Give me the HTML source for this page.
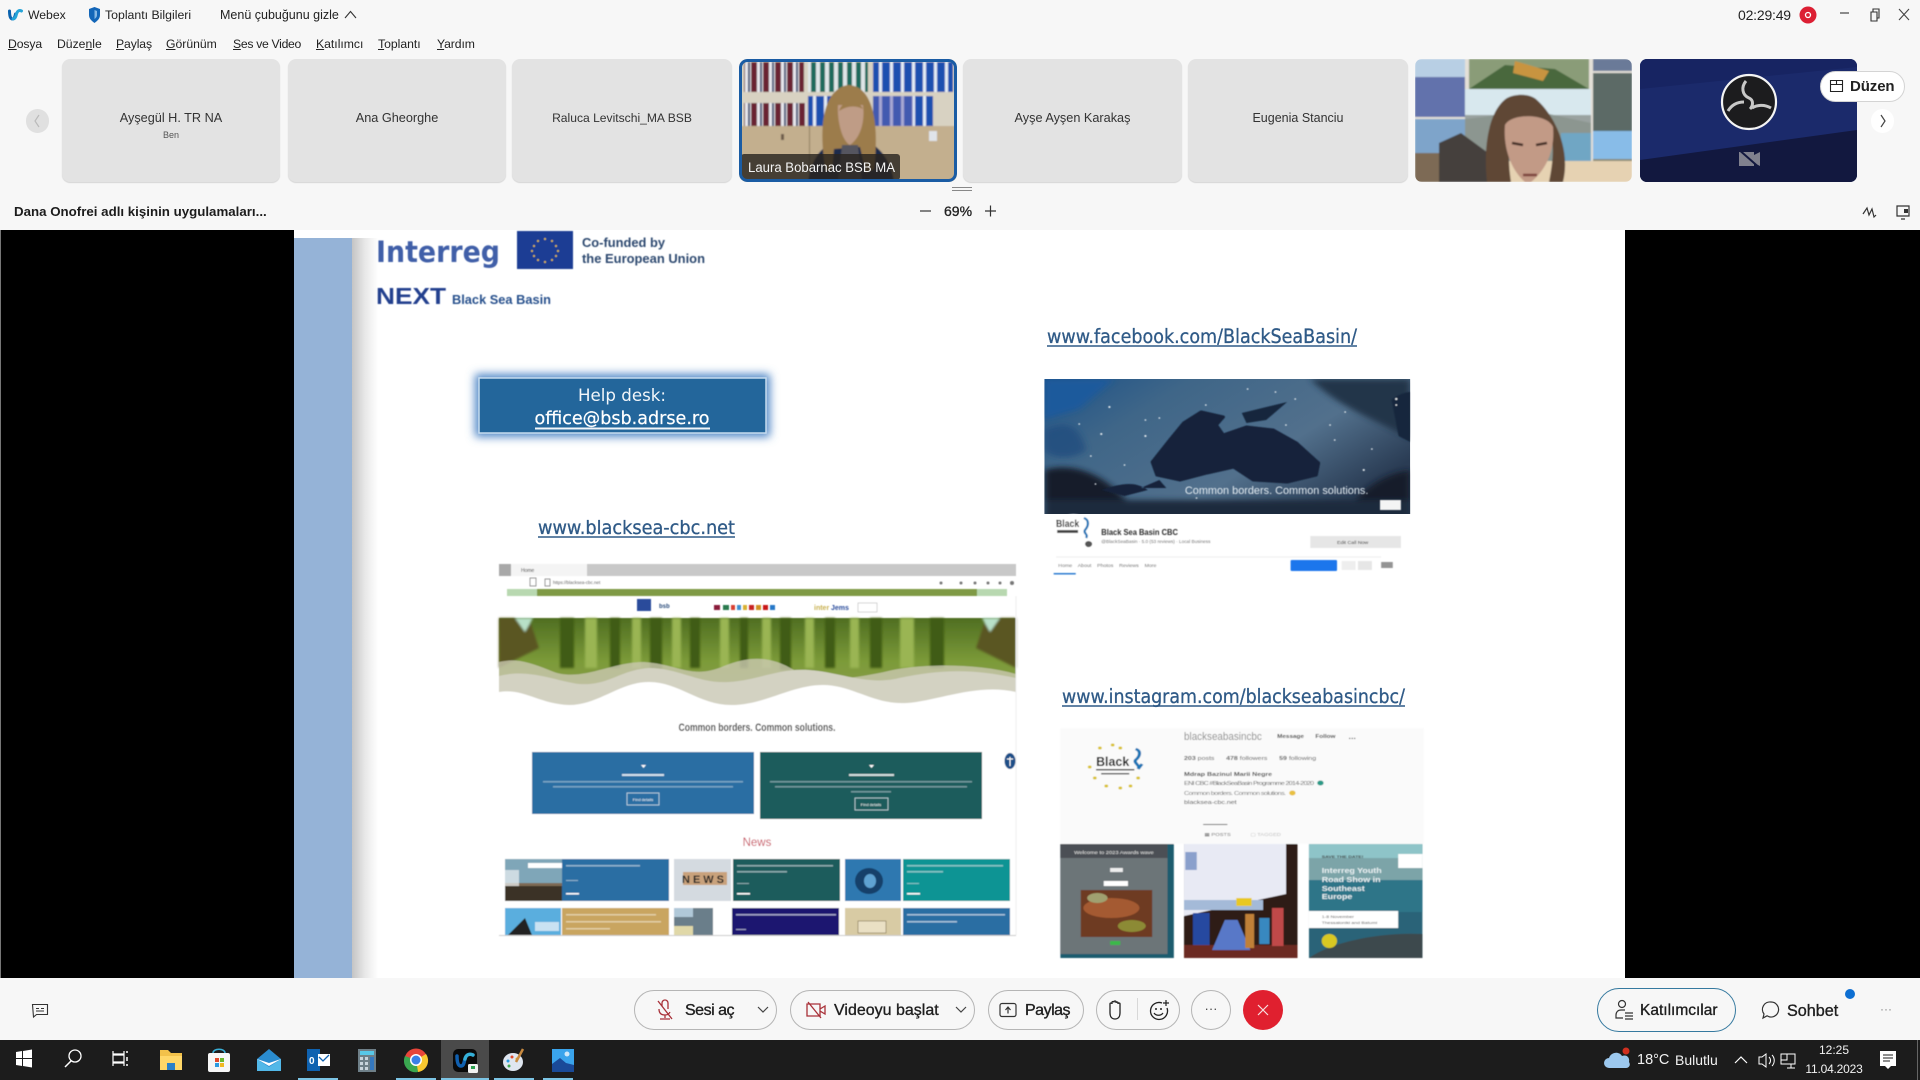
<!DOCTYPE html>
<html lang="tr"><head><meta charset="utf-8"><title>Webex</title>
<style>
html,body{margin:0;padding:0;width:1920px;height:1080px;overflow:hidden;background:#f7f7f7;font-family:"Liberation Sans",sans-serif;color:#222}
.a{position:absolute;white-space:nowrap}
.t{line-height:16px;font-size:13px}
.m{font-size:12.2px;line-height:16px;top:36px;color:#222}
.tile{position:absolute;top:59px;height:123px;background:#e3e3e3;border-radius:8px;box-shadow:0 1px 1px #d4d4d4;text-align:center;line-height:118px;font-size:12.7px;color:#333}
.pill{position:absolute;top:990px;height:38px;border:1px solid #b5b5b5;border-radius:20px;background:#f7f7f7}
.bt{position:absolute;font-size:16px;font-weight:400;line-height:20px;top:1001px;color:#1f1f1f;white-space:nowrap;-webkit-text-stroke:.35px #1f1f1f}
svg{position:absolute;overflow:visible}
u{text-decoration:underline}
</style></head><body>

<!-- title bar -->
<svg style="left:8px;top:8px" width="15" height="14" viewBox="0 0 15 14"><path d="M1.500 3c0 5 1 8 3 8s2.500-3 3-5" fill="none" stroke="#0a62ae" stroke-width="3" stroke-linecap="round"/><path d="M13.500 3c-2-1-4-.5-5 3-.6 3-2 5-3.500 5" fill="none" stroke="#25a4d8" stroke-width="3" stroke-linecap="round"/></svg>
<div class="a t" style="left:28px;top:7px;font-size:12.2px">Webex</div>
<svg style="left:88px;top:7px" width="13" height="16" viewBox="0 0 13 16"><path d="M6.500 0 12 2v6c0 4-3 6-5.500 8C4 14 1 12 1 8V2z" fill="#1366b8"/><path d="M6.500 3 9 4v4c0 2-1.200 3-2.500 4z" fill="#86b8e4"/></svg>
<div class="a t" style="left:105px;top:7px;font-size:12.300px">Toplantı Bilgileri</div>
<div class="a t" style="left:220px;top:7px;font-size:12.500px">Menü çubuğunu gizle</div>
<svg style="left:344px;top:10px" width="13" height="9" viewBox="0 0 13 9"><path d="M1 8 6.500 1.500 12 8" fill="none" stroke="#333" stroke-width="1.100"/></svg>
<div class="a t" style="left:1738px;top:7px;font-size:14px;letter-spacing:-.2px">02:29:49</div>
<svg style="left:1799px;top:6px" width="18" height="18"><circle cx="9" cy="9" r="8.500" fill="#dc1f33"/><circle cx="9" cy="9" r="2.500" fill="none" stroke="#fff" stroke-width="1.300"/></svg>
<svg style="left:1838px;top:6px" width="76" height="18" viewBox="0 0 76 18"><path d="M2 7h9" stroke="#444" stroke-width="1.200"/><path d="M33 6h6v9h-6zM35 6V3h6v9h-2" fill="none" stroke="#333" stroke-width="1.100"/><path d="M61 3l10 11M71 3 61 14" stroke="#444" stroke-width="1.100"/></svg>

<div class="a m" style="left:8px;letter-spacing:-.1px"><u>D</u>osya</div>
<div class="a m" style="left:57px"><span>Düze</span><u>n</u>le</div>
<div class="a m" style="left:116px;letter-spacing:-.1px"><u>P</u>aylaş</div>
<div class="a m" style="left:166px"><u>G</u>örünüm</div>
<div class="a m" style="left:233px;letter-spacing:-.3px"><u>S</u>es ve Video</div>
<div class="a m" style="left:316px"><u>K</u>atılımcı</div>
<div class="a m" style="left:378px"><u>T</u>oplantı</div>
<div class="a m" style="left:437px;letter-spacing:-.1px"><u>Y</u>ardım</div>

<!-- thumbnails -->
<div class="a" style="left:26px;top:109px;width:23px;height:24px;border-radius:12px;background:#e0e0e0"></div>
<svg style="left:33px;top:114px" width="8" height="14"><path d="M6 1 2 7l4 6" fill="none" stroke="#bbb" stroke-width="1.200"/></svg>
<div class="tile" style="left:62px;width:218px">Ayşegül H. TR NA</div>
<div class="a" style="left:62px;width:218px;top:129px;text-align:center;font-size:9px;line-height:12px;color:#555">Ben</div>
<div class="tile" style="left:288px;width:218px">Ana Gheorghe</div>
<div class="tile" style="left:512px;width:220px;font-size:12.100px">Raluca Levitschi_MA BSB</div>
<div class="tile" style="left:963px;width:219px">Ayşe Ayşen Karakaş</div>
<div class="tile" style="left:1188px;width:220px;font-size:12.500px">Eugenia Stanciu</div>

<!-- Laura tile -->
<svg style="left:739px;top:59px;border-radius:8px" width="218" height="123" viewBox="0 0 218 123">
<defs>
<pattern id="b1" width="12" height="30" patternUnits="userSpaceOnUse"><rect width="12" height="30" fill="#e8e8ee"/><rect width="6" height="30" fill="#6a2030"/><rect x="9" width="2" height="30" fill="#20406a"/></pattern>
<pattern id="b2" width="9" height="30" patternUnits="userSpaceOnUse"><rect width="9" height="30" fill="#dfe6e8"/><rect width="5" height="30" fill="#1c6a5c"/></pattern>
<pattern id="b3" width="11" height="30" patternUnits="userSpaceOnUse"><rect width="11" height="30" fill="#e4ecf6"/><rect width="8" height="30" fill="#1d50b0"/></pattern>
<clipPath id="lc"><rect width="218" height="123" rx="8"/></clipPath>
<filter id="s"><feGaussianBlur stdDeviation=".8"/></filter>
</defs>
<g clip-path="url(#lc)"><g filter="url(#s)">
<rect width="218" height="123" fill="#c4b08c"/>
<rect y="0" width="218" height="67" fill="#d8d2c2"/>
<rect x="5" y="3" width="60" height="30" fill="url(#b1)"/>
<rect x="69" y="3" width="60" height="30" fill="url(#b2)"/>
<rect x="134" y="3" width="80" height="30" fill="url(#b3)"/>
<rect x="5" y="37" width="62" height="30" fill="url(#b1)" transform="translate(0 7)"/>
<rect x="69" y="37" width="30" height="30" fill="url(#b3)"/>
<rect x="134" y="37" width="60" height="30" fill="url(#b3)"/>
<rect x="134" y="37" width="40" height="30" fill="#6a64b0" opacity=".5"/>
<rect x="0" y="67" width="218" height="56" fill="#c3af8e"/>
<rect x="70" y="67" width="1" height="56" fill="#8c7a5c"/><rect x="42" y="75" width="3" height="6" fill="#6a5a48"/><rect x="190" y="72" width="8" height="10" fill="#e0e4ea"/>
<path d="M69 123c2-20 12-36 28-40h32c14 6 24 22 26 40z" fill="#1b2c4c"/>
<path d="M87 112c-8-40-4-82 22-86 24 0 32 36 26 84l-8 4-6-26-26 2-2 20z" fill="#9c7c4c"/>
<path d="M99 46h25c2 16-2 32-13 40-8-4-13-24-12-40z" fill="#bf9c86"/>
<path d="M100 52c4-12 18-14 24-2-8-4-16-3-24 2z" fill="#9c7c4c"/>
<path d="M103 86h16l4 37h-24z" fill="#55555f"/>
</g>
<rect x="2" y="95" width="159" height="26" rx="3" fill="#2a2520" opacity=".82"/>
<text x="9" y="113" font-family="Liberation Sans" font-size="13.500" fill="#f4f4f4" textLength="147" lengthAdjust="spacingAndGlyphs">Laura Bobarnac BSB MA</text>
<rect x="1.500" y="1.500" width="215" height="120" rx="7" fill="none" stroke="#1a5ca4" stroke-width="3"/></g>
</svg>

<!-- woman photo tile -->
<svg style="left:1415px;top:59px" width="217" height="123" viewBox="0 0 217 123">
<defs><clipPath id="wc"><rect width="217" height="123" rx="7"/></clipPath></defs>
<g clip-path="url(#wc)"><g filter="url(#s)">
<rect width="217" height="123" fill="#e4e0d8"/>
<rect width="50" height="18" fill="#b8cfe4"/><rect y="18" width="50" height="40" fill="#6272ac"/><rect y="60" width="50" height="34" fill="#7ea4ca"/><rect y="94" width="50" height="29" fill="#7d6a55"/>
<rect x="54" width="120" height="30" fill="#8a9c78"/><path d="M54 30 90 6l50 4 34 20z" fill="#48683e"/><path d="M100 2l34 10-6 10-30-8z" fill="#c89440"/>
<rect x="178" width="39" height="12" fill="#6a7a98"/><rect x="178" y="14" width="39" height="58" fill="#5c6a66"/><rect x="178" y="72" width="39" height="28" fill="#88bce8"/><rect x="178" y="100" width="39" height="23" fill="#8a8a74"/>
<rect x="50" y="30" width="126" height="34" fill="#d8e8ee"/><rect x="50" y="56" width="126" height="46" fill="#9aa2a0"/><path d="M50 60l70-8 56 12v38H50z" fill="#8c9690"/><rect x="146" y="74" width="30" height="28" fill="#70a6c4"/>
<rect x="50" y="102" width="167" height="21" fill="#e6d2b2"/>
<path d="M24 123V84l22-10 30 22 4 27z" fill="#45403e"/>
<path d="M72 123c-4-36 2-72 20-84 10-5 24-4 30 2 18 16 34 50 26 82h-14c4-20 6-40 0-50-12-10-28-10-36 2-6 16-4 34-2 48z" fill="#5e4636"/>
<path d="M90 66c6-12 42-12 48 2 2 22-6 42-22 55h-6c-14-12-22-34-20-57z" fill="#c29a86"/>
<path d="M97 84l11 2M121 86l11-2" stroke="#3f2a20" stroke-width="2.500"/>
<path d="M108 116h14" stroke="#7a4038" stroke-width="2.500"/>
</g></g></svg>

<!-- OBS tile -->
<svg style="left:1640px;top:59px" width="217" height="123" viewBox="0 0 217 123">
<defs><clipPath id="oc"><rect width="217" height="123" rx="7"/></clipPath></defs>
<g clip-path="url(#oc)"><rect width="217" height="123" fill="#1b2a6b"/><path d="M0 0h217v8L0 30z" fill="#172462"/><path d="M0 101l217-30v52H0z" fill="#12183f"/>
<circle cx="109" cy="43" r="27" fill="#1c1c1e" stroke="#f4f4f4" stroke-width="2.200"/>
<path d="M106 22c-5 6-4 14 3 17 5 2 4 8 1 11M131 49c-7-4-14-3-19 0M88 52c3-5 8-9 16-9" fill="none" stroke="#c8c8c8" stroke-width="3"/>
<rect x="99" y="93" width="15" height="14" fill="#80818e"/><path d="M114 96l6-3v14l-6-3z" fill="#80818e"/><path d="M97 89l25 22" stroke="#12183f" stroke-width="2"/></g></svg>

<div class="a" style="left:1820px;top:71px;width:83px;height:29px;background:#fff;border:1px solid #d4d4d4;border-radius:16px"></div>
<svg style="left:1829px;top:79px" width="15" height="14"><path d="M1.500 1.500h12v11h-12zM1.500 5.500h12M7.500 1.500v4" fill="none" stroke="#222" stroke-width="1.100"/></svg>
<div class="a" style="left:1850px;top:78px;font-size:15px;line-height:17px;font-weight:700;color:#222;letter-spacing:-.1px">Düzen</div>
<div class="a" style="left:1871px;top:109px;width:23px;height:24px;border-radius:12px;background:#fff"></div>
<svg style="left:1879px;top:114px" width="8" height="14"><path d="M2 1l4 6-4 6" fill="none" stroke="#444" stroke-width="1.200"/></svg>

<!-- share bar -->
<svg style="left:952px;top:187px" width="20" height="5"><path d="M0 .5h20M0 3.500h20" stroke="#888"/></svg>
<div class="a" style="left:14px;top:204px;font-size:13.300px;line-height:16px;font-weight:700;color:#1c1c1c">Dana Onofrei adlı kişinin uygulamaları...</div>
<svg style="left:920px;top:204px" width="74" height="14"><path d="M0 7h11" stroke="#333" stroke-width="1.200"/><path d="M65 7h11M70.500 1.500v11" stroke="#333" stroke-width="1.200"/></svg>
<div class="a" style="left:944px;top:203px;font-size:14px;line-height:16px;font-weight:400;-webkit-text-stroke:.3px #222;color:#222">69%</div>
<svg style="left:1862px;top:203px" width="50" height="18" viewBox="0 0 50 18"><path d="M1 11 5 5l2 7 3-6 2 8 2-2" fill="none" stroke="#333" stroke-width="1.200"/><path d="M35 3h12v10H35zM39 16h4" fill="none" stroke="#333" stroke-width="1.200"/><rect x="42" y="6" width="4" height="4" fill="#333"/></svg>

<!-- black and slide -->
<div class="a" style="left:0;top:230px;width:1920px;height:748px;background:#000"></div>
<div class="a" style="left:0;top:230px;width:1px;height:748px;background:#777"></div>
<div class="a" style="left:294px;top:230px;width:1331px;height:748px;background:#fff"></div>
<div class="a" style="left:294px;top:238px;width:58px;height:740px;background:#95b3d7"></div>
<div class="a" style="left:352px;top:238px;width:26px;height:740px;background:linear-gradient(90deg,#c4c4c4,#e8e8e8 50%,#fff)"></div>

<svg style="left:0;top:0" width="1920" height="1080" viewBox="0 0 1920 1080" font-family="Liberation Sans">
<defs>
<filter id="bl"><feGaussianBlur stdDeviation=".5"/></filter>
<filter id="bl2"><feGaussianBlur stdDeviation="1"/></filter>
<filter id="bl3"><feGaussianBlur stdDeviation="3"/></filter>
<filter id="gl" x="-20%" y="-40%" width="140%" height="180%"><feGaussianBlur stdDeviation="4.500"/></filter>
<clipPath id="mapc"><rect x="1041" y="379" width="315" height="135"/></clipPath>
<linearGradient id="map" x1="0" y1="0" x2="1" y2=".6"><stop offset="0" stop-color="#1d5288"/><stop offset=".3" stop-color="#3f6688"/><stop offset=".7" stop-color="#52708c"/><stop offset="1" stop-color="#2a3c54"/></linearGradient>
<linearGradient id="fo" x1="0" y1="0" x2="0" y2="1"><stop offset="0" stop-color="#4f6e22"/><stop offset=".5" stop-color="#7c9b39"/><stop offset="1" stop-color="#8f9a50"/></linearGradient>
</defs>

<!-- logos -->
<g filter="url(#bl)">
<text x="376" y="262" font-family="DejaVu Sans" font-size="29" font-weight="700" fill="#3f5ea8" textLength="124" lengthAdjust="spacingAndGlyphs">Interreg</text>
<rect x="517" y="231" width="56" height="38" fill="#1f3c94"/>
<g fill="#e3c13a"><circle cx="545" cy="239" r="1"/><circle cx="552" cy="241" r="1"/><circle cx="556" cy="246" r="1"/><circle cx="558" cy="251" r="1"/><circle cx="556" cy="256" r="1"/><circle cx="552" cy="260" r="1"/><circle cx="545" cy="262" r="1"/><circle cx="538" cy="260" r="1"/><circle cx="534" cy="256" r="1"/><circle cx="532" cy="251" r="1"/><circle cx="534" cy="246" r="1"/><circle cx="538" cy="241" r="1"/></g>
<text x="582" y="247" font-size="13" font-weight="700" fill="#2d4a70" textLength="83" lengthAdjust="spacingAndGlyphs">Co-funded by</text>
<text x="582" y="263" font-size="13" font-weight="700" fill="#2d4a70" textLength="123" lengthAdjust="spacingAndGlyphs">the European Union</text>
<text x="376" y="304" font-size="23" font-weight="700" fill="#243f8e" textLength="70" lengthAdjust="spacingAndGlyphs">NEXT</text>
<text x="452" y="304" font-size="13" font-weight="700" fill="#27508c" textLength="99" lengthAdjust="spacingAndGlyphs">Black Sea Basin</text>
</g>

<!-- help desk -->
<rect x="475" y="374" width="295" height="63" fill="#4f86c6" filter="url(#gl)"/>
<rect x="479" y="378" width="287" height="55" fill="#23669b" stroke="#c6dcef" stroke-width="1.500"/>
<text x="622" y="401" font-family="DejaVu Sans" font-size="17" fill="#f2f6fa" text-anchor="middle" textLength="88" lengthAdjust="spacingAndGlyphs">Help desk:</text>
<text x="622" y="424" font-family="DejaVu Sans" font-size="17.500" fill="#fff" text-anchor="middle" textLength="175" lengthAdjust="spacingAndGlyphs" stroke="#fff" stroke-width=".2">office@bsb.adrse.ro</text>
<path d="M535 428.500h175" stroke="#f2f6fa" stroke-width="2"/>

<!-- links -->
<g fill="#2f5a87" stroke="#2f5a87" stroke-width=".3" font-family="DejaVu Sans" font-size="19">
<text x="538" y="534" textLength="197" lengthAdjust="spacingAndGlyphs">www.blacksea-cbc.net</text>
<text x="1047" y="343" font-size="19.500" textLength="310" lengthAdjust="spacingAndGlyphs">www.facebook.com/BlackSeaBasin/</text>
<text x="1062" y="703" font-size="19.500" textLength="343" lengthAdjust="spacingAndGlyphs">www.instagram.com/blackseabasincbc/</text>
</g>
<g stroke="#2f5a87" stroke-width="1.600"><path d="M538 537h197M1047 346h310M1062 706h343"/></g>

<!-- facebook shot (stretched group) -->
<g transform="translate(1020 0) scale(1.1613 1) translate(-1020 0)">
<g clip-path="url(#mapc)">
<rect x="1041" y="379" width="315" height="135" fill="url(#map)"/>
<g filter="url(#bl3)"><path d="M1041 470c30-10 60 10 80 44h-80zM1300 514c10-20 30-40 56-44v44z" fill="#141e2c"/><path d="M1041 500h315v20h-315z" fill="#1c2a3c"/><path d="M1270 379h86v60c-30-20-60-30-86-60z" fill="#243448"/><path d="M1041 379h60l-30 30-30 10z" fill="#1c5a9c"/><path d="M1041 430c20-10 30-5 36 20-10 10-30 10-36 0z" fill="#1f4d7e" opacity=".8"/></g>
<g filter="url(#bl)">
<path d="M1134 462 1149 440 1161 423 1176 412 1195 417 1189 425 1195 435 1215 427 1238 430 1258 443 1277 463 1275 475 1250 482 1221 480 1204 467 1181 473 1158 480 1138 475z" fill="#13243a" stroke="#13243a" stroke-width="3" stroke-linejoin="round"/>
<path d="M1211 413 1250 402 1232 420 1215 423z" fill="#15273e"/>
<path d="M1090 490c20-8 30-8 40 0l-20 6zM1140 480l-16 8 22 0z" fill="#13243a"/>
<path d="M1340 400c8-8 16-8 16-8v50l-10-6z" fill="#18283e"/>
<g fill="#e8edf0"><circle cx="1097" cy="407" r="1"/><circle cx="1071" cy="424" r=".8"/><circle cx="1090" cy="434" r="1"/><circle cx="1128" cy="436" r="1"/><circle cx="1140" cy="418" r=".8"/><circle cx="1216" cy="389" r=".8"/><circle cx="1240" cy="392" r=".8"/><circle cx="1257" cy="399" r=".8"/><circle cx="1249" cy="425" r=".8"/><circle cx="1344" cy="399" r="1"/><circle cx="1344" cy="405" r=".8"/><circle cx="1291" cy="440" r=".8"/><circle cx="1323" cy="449" r=".8"/><circle cx="1316" cy="470" r="1"/><circle cx="1081" cy="456" r=".8"/><circle cx="1085" cy="484" r=".8"/><circle cx="1110" cy="465" r=".8"/><circle cx="1172" cy="498" r=".8"/><circle cx="1128" cy="420" r=".8"/><circle cx="1180" cy="405" r=".8"/><circle cx="1287" cy="425" r=".8"/><circle cx="1300" cy="412" r=".8"/></g>
<text x="1162" y="494" font-size="11" fill="#e4ecf2" textLength="158" lengthAdjust="spacingAndGlyphs">Common borders. Common solutions.</text>
<rect x="1330" y="500" width="18" height="10" fill="#f4f4f4"/>
</g></g>
<g filter="url(#bl)">
<circle cx="1066" cy="532" r="18" fill="#fff"/>
<text x="1051" y="527" font-size="10" font-weight="700" fill="#222" textLength="20" lengthAdjust="spacingAndGlyphs">Black</text>
<path d="M1075 518c5 2 4 8 1 12-2 3 3 4 1 8" fill="none" stroke="#2178b8" stroke-width="2"/>
<rect x="1052" y="530" width="18" height="3" fill="#444"/>
<circle cx="1079" cy="544" r="3" fill="#555"/>
<text x="1090" y="535" font-size="8" font-weight="700" fill="#2a2a2a" textLength="66" lengthAdjust="spacingAndGlyphs">Black Sea Basin CBC</text>
<text x="1090" y="543" font-size="4.500" fill="#777" textLength="94" lengthAdjust="spacingAndGlyphs">@BlackSeaBasin · 5.0 (53 reviews) · Local Business</text>
<rect x="1270" y="536" width="78" height="12" fill="#e6e6e6"/>
<text x="1293" y="544" font-size="4.500" fill="#333">Edit Call Now</text>
<path d="M1051 557h280" stroke="#eee"/>
<text x="1053" y="567" font-size="4.500" fill="#777" xml:space="preserve">Home    About    Photos    Reviews    More</text>
<rect x="1049" y="573" width="19" height="1.500" fill="#2a7ad0"/>
<rect x="1253" y="560" width="40" height="11" rx="1" fill="#1a76ec"/>
<rect x="1297" y="561" width="12" height="9" fill="#eee"/><rect x="1311" y="561" width="12" height="9" fill="#e6e6e6"/>
<rect x="1331" y="562" width="10" height="6" fill="#666" opacity=".7"/>
</g></g>

<!-- website shot -->
<g filter="url(#bl)">
<rect x="499" y="564" width="517" height="12" fill="#c8c8c8"/>
<rect x="499" y="564" width="12" height="12" fill="#a8a8a8"/><rect x="511" y="564" width="76" height="12" fill="#f4f4f4"/>
<text x="521" y="572" font-size="5" fill="#444">Home</text>
<text x="553" y="584" font-size="4.500" fill="#666">https://blacksea-cbc.net</text>
<path d="M530 578h6v8h-6zM545 579h5v7h-5z" fill="none" stroke="#777" stroke-width=".7"/>
<g fill="#777"><circle cx="941" cy="583" r="1.500"/><circle cx="961" cy="583" r="1.500"/><circle cx="975" cy="583" r="1.500"/><circle cx="988" cy="583" r="1.500"/><circle cx="1000" cy="583" r="1.500"/><circle cx="1012" cy="583" r="2"/></g>
<rect x="507" y="589" width="500" height="7" fill="#7f9a44"/>
<rect x="507" y="589" width="30" height="7" fill="#b8d8b0"/><rect x="977" y="589" width="30" height="7" fill="#b8d8b0"/>
<rect x="637" y="599" width="14" height="12" fill="#2b4c9b"/>
<text x="659" y="608" font-size="6" font-weight="700" fill="#2b4c7b">bsb</text>
<rect x="714" y="605" width="6" height="5" fill="#8a1c3a"/><rect x="723" y="605" width="6" height="5" fill="#2c7a50"/><rect x="731" y="605" width="4" height="5" fill="#d84030"/><rect x="737" y="605" width="4" height="5" fill="#4090d0"/><rect x="743" y="605" width="4" height="5" fill="#d8b030"/><rect x="749" y="605" width="5" height="5" fill="#c82020"/><rect x="756" y="605" width="5" height="5" fill="#d09020"/><rect x="763" y="605" width="5" height="5" fill="#c81818"/><rect x="770" y="605" width="5" height="5" fill="#2878c8"/>
<text x="814" y="610" font-size="7" font-weight="700" fill="#c8b050">inter</text><text x="831" y="610" font-size="7" font-weight="700" fill="#2b4c9b">Jems</text>
<rect x="858" y="603" width="19" height="9" fill="#fff" stroke="#aaa" stroke-width=".5"/>
<rect x="499" y="618" width="517" height="87" fill="url(#fo)"/>
<g filter="url(#bl2)">
<path d="M499 618h30l10 30-40 20z" fill="#5a5620"/><path d="M1016 618h-30l-10 30 40 20z" fill="#5a5620"/>
<path d="M515 618h18l-8 14z" fill="#b8e0c8"/><path d="M1000 618h-18l8 14z" fill="#b8e0c8"/>
<g fill="#3f5c18"><rect x="560" y="618" width="14" height="50"/><rect x="610" y="618" width="10" height="50"/><rect x="650" y="618" width="12" height="52"/><rect x="690" y="618" width="10" height="50"/><rect x="740" y="618" width="8" height="50"/><rect x="780" y="618" width="11" height="52"/><rect x="825" y="618" width="10" height="50"/><rect x="870" y="618" width="12" height="50"/><rect x="930" y="618" width="14" height="50"/></g>
<g fill="#9ab552"><rect x="585" y="618" width="12" height="50"/><rect x="632" y="618" width="9" height="50"/><rect x="672" y="618" width="9" height="50"/><rect x="720" y="618" width="9" height="50"/><rect x="762" y="618" width="9" height="50"/><rect x="805" y="618" width="9" height="50"/><rect x="850" y="618" width="9" height="50"/><rect x="900" y="618" width="14" height="50"/></g>
</g>
<path d="M499 662c16-4 30 0 50 8 30 14 60-8 95-8 34 2 48 18 80 4 30-12 50-8 70 4 30 14 60 8 90 2 30-8 90-10 132 2v36H499z" fill="#c9c8b0" opacity=".8"/>
<path d="M499 676c30-8 60 6 80 8 30 2 40-14 70-16 30 0 50 16 80 14 30-2 50-14 80-12 30 2 60 16 90 8 40-8 70-10 117 0v30H499z" fill="#d3d2c2"/>
<path d="M499 692c25-4 40 12 70 13 30 0 50-23 80-23 30 0 50 23 82 23 34 0 60-20 92-20 30 0 50 20 84 18 30-2 70-20 109-11v14H499z" fill="#fff"/>
<rect x="499" y="705" width="517" height="230" fill="#fff"/>
<path d="M1016 596v339" stroke="#eee"/>
<text x="757" y="731" font-size="11" font-weight="700" fill="#3c3c3c" text-anchor="middle" textLength="157" lengthAdjust="spacingAndGlyphs">Common borders. Common solutions.</text>
<rect x="532" y="752" width="222" height="62" fill="#2a6ea3"/>
<rect x="760" y="752" width="222" height="67" fill="#1f5b5b"/>
<g fill="#d9e6ee" opacity=".45"><rect x="543" y="781" width="200" height="1.500"/><rect x="553" y="786" width="180" height="1.500"/><rect x="770" y="781" width="202" height="1.500"/><rect x="775" y="786" width="192" height="1.500"/><rect x="851" y="791" width="40" height="1.500"/></g>
<rect x="622" y="774" width="42" height="2" fill="#fff" opacity=".8"/><rect x="849" y="774" width="45" height="2" fill="#fff" opacity=".8"/>
<path d="M641 765h5l-2.500 3zM869 765h5l-2.500 3z" fill="#fff"/>
<rect x="627" y="793" width="32" height="12" fill="none" stroke="#dfe9f0" stroke-width=".7"/><rect x="855" y="798" width="33" height="12" fill="none" stroke="#dfe9f0" stroke-width=".7"/>
<text x="643" y="801" font-size="4" fill="#fff" text-anchor="middle">Find details</text><text x="871" y="806" font-size="4" fill="#fff" text-anchor="middle">Find details</text>
<ellipse cx="1010" cy="761" rx="5.500" ry="8" fill="#1c4f88"/><path d="M1010 757v9M1007 759h6" stroke="#fff"/>
<text x="757" y="846" font-size="11.500" fill="#c8485a" text-anchor="middle">News</text>
<!-- news -->
<rect x="505" y="859" width="57" height="42" fill="#7d6a54"/><rect x="505" y="859" width="57" height="24" fill="#7fa6b8"/><rect x="505" y="886" width="57" height="15" fill="#3a3026"/><rect x="528" y="863" width="34" height="5" fill="#fff"/><rect x="505" y="870" width="14" height="16" fill="#eef2f4" opacity=".7"/>
<rect x="562" y="859" width="107" height="42" fill="#2a6ea3"/>
<rect x="674" y="859" width="57" height="42" fill="#d4dae0"/><rect x="683" y="872" width="44" height="13" fill="#c9a27c"/>
<text x="682" y="883" font-size="11" font-weight="700" fill="#222" textLength="42" lengthAdjust="spacing">NEWS</text>
<rect x="733" y="859" width="107" height="42" fill="#1f5b5b"/>
<rect x="845" y="859" width="56" height="42" fill="#2e78b0"/><ellipse cx="869" cy="881" rx="14" ry="13" fill="#14406a"/><ellipse cx="870" cy="881" rx="6" ry="7" fill="#5fa2d2"/>
<rect x="903" y="859" width="107" height="42" fill="#0f9494"/>
<g fill="#e4ecf0" opacity=".55"><rect x="566" y="865" width="74" height="1.500"/><rect x="566" y="880" width="12" height="1"/><rect x="737" y="865" width="96" height="1.500"/><rect x="737" y="871" width="50" height="1.500"/><rect x="737" y="883" width="12" height="1"/><rect x="907" y="865" width="96" height="1.500"/><rect x="907" y="871" width="36" height="1.500"/><rect x="907" y="883" width="12" height="1"/></g>
<g fill="#fff"><rect x="566" y="893" width="13" height="1.500"/><rect x="737" y="893" width="13" height="1.500"/><rect x="907" y="893" width="13" height="1.500"/></g>
<rect x="505" y="908" width="56" height="27" fill="#5aaede"/><path d="M508 935 525 918l7 17z" fill="#222"/><rect x="535" y="922" width="24" height="9" fill="#c9e2f2"/>
<rect x="562" y="908" width="107" height="27" fill="#c9a560"/>
<rect x="674" y="908" width="39" height="27" fill="#6a7e8a"/><rect x="674" y="908" width="19" height="9" fill="#b0c8d8"/><rect x="674" y="926" width="19" height="9" fill="#e0d8a8"/>
<rect x="732" y="908" width="107" height="27" fill="#1a1670"/>
<rect x="845" y="908" width="56" height="27" fill="#d8cba4"/><rect x="858" y="921" width="28" height="12" fill="#eae0c4" stroke="#6c5c38" stroke-width=".5"/>
<rect x="903" y="908" width="107" height="27" fill="#2a6ea3"/>
<g fill="#f2ead4" opacity=".6"><rect x="566" y="914" width="90" height="1.500"/><rect x="566" y="921" width="95" height="1.500"/><rect x="566" y="928" width="44" height="1.500"/></g>
<g fill="#e8ecf6" opacity=".65"><rect x="736" y="914" width="100" height="1.500"/><rect x="736" y="929" width="10" height="1"/><rect x="907" y="914" width="98" height="1.500"/><rect x="907" y="921" width="50" height="1.500"/></g>
<path d="M499 935.500h517" stroke="#ccc"/>
</g>

<!-- instagram shot (stretched group) -->
<g filter="url(#bl)" transform="translate(1040 0) scale(1.2747 1) translate(-1040 0)">
<rect x="1056" y="728" width="285" height="116" fill="#fafafa"/>
<g fill="#d9c32e"><circle cx="1097" cy="745" r="1.500"/><circle cx="1087" cy="748" r="1.500"/><circle cx="1103" cy="748" r="1.500"/><circle cx="1079" cy="767" r="1.500"/><circle cx="1083" cy="778" r="1.500"/><circle cx="1092" cy="786" r="1.500"/><circle cx="1103" cy="788" r="1.500"/><circle cx="1111" cy="786" r="1.500"/><circle cx="1117" cy="778" r="1.500"/></g>
<text x="1084" y="766" font-size="13" font-weight="700" fill="#111" textLength="26" lengthAdjust="spacingAndGlyphs">Black</text>
<path d="M1115 749c5 2 3 8 0 11-2 3 4 5 2 9l3-5" fill="none" stroke="#1d76b6" stroke-width="2.500"/>
<rect x="1084" y="769" width="30" height="1.500" fill="#444"/><rect x="1088" y="773" width="22" height="1.500" fill="#555"/>
<text x="1153" y="740" font-size="11" fill="#8a8a8a" textLength="61" lengthAdjust="spacingAndGlyphs">blackseabasincbc</text>
<text x="1226" y="738" font-size="5" font-weight="700" fill="#444">Message</text><text x="1256" y="738" font-size="5" font-weight="700" fill="#444">Follow</text><text x="1282" y="739" font-size="7" font-weight="700" fill="#444">...</text>
<text x="1153" y="760" font-size="5.500" fill="#555" xml:space="preserve"><tspan font-weight="700">203</tspan> posts      <tspan font-weight="700">478</tspan> followers      <tspan font-weight="700">59</tspan> following</text>
<text x="1153" y="776" font-size="5.500" font-weight="700" fill="#444">Mdrap Bazinul Marii Negre</text>
<text x="1153" y="785" font-size="5.500" fill="#666" textLength="102">ENI CBC #BlackSeaBasin Programme 2014-2020</text><circle cx="1260" cy="783" r="2.500" fill="#2a9a88"/>
<text x="1153" y="795" font-size="5.500" fill="#777" textLength="80">Common borders. Common solutions.</text><circle cx="1238" cy="793" r="2.500" fill="#e8c040"/>
<text x="1153" y="804" font-size="5.500" fill="#444">blacksea-cbc.net</text>
<rect x="1168" y="824" width="19" height="1" fill="#666"/>
<text x="1169" y="836" font-size="4.500" fill="#666">▦ POSTS</text><text x="1205" y="836" font-size="4.500" fill="#bbb">▢ TAGGED</text>
<rect x="1056" y="844" width="89" height="114" fill="#1c5c6e"/><rect x="1056" y="844" width="84" height="110" fill="#6c7478"/><rect x="1056" y="844" width="84" height="14" fill="#4c5054"/>
<text x="1098" y="854" font-size="4.500" fill="#e8e8e8" text-anchor="middle">Welcome to 2023 Awards wave</text>
<rect x="1095" y="868" width="10" height="4" fill="#eee"/><rect x="1090" y="881" width="19" height="5" fill="#fff"/>
<rect x="1072" y="890" width="56" height="47" fill="#6e3a22"/><ellipse cx="1096" cy="908" rx="22" ry="10" fill="#a45a30"/><ellipse cx="1085" cy="898" rx="8" ry="5" fill="#a0a070"/><ellipse cx="1112" cy="926" rx="11" ry="6" fill="#8c8a34"/>
<rect x="1095" y="941" width="8" height="4" fill="#3ab84a"/>
<rect x="1153" y="844" width="89" height="114" fill="#2e1c16"/><path d="M1153 844h60l20 0v50l-80 22z" fill="#e8eaf4"/><rect x="1153" y="900" width="62" height="10" fill="#a4bad8"/><rect x="1153" y="945" width="89" height="13" fill="#6c2a20"/><rect x="1194" y="898" width="12" height="8" fill="#e8c820"/><rect x="1154" y="852" width="9" height="18" fill="#8aa0cc"/>
<rect x="1160" y="913" width="13" height="32" fill="#2848a0"/><path d="M1185 920h10l10 30h-30z" fill="#5878c8"/><rect x="1201" y="914" width="7" height="34" fill="#c08038"/><rect x="1212" y="918" width="8" height="26" fill="#3888c0"/><rect x="1222" y="908" width="9" height="38" fill="#c04848"/>
<rect x="1251" y="844" width="89" height="114" fill="#2a6478"/><rect x="1251" y="844" width="89" height="14" fill="#8ec4c8"/><rect x="1251" y="858" width="89" height="22" fill="#7ca4a8"/><rect x="1251" y="880" width="89" height="32" fill="#2f7488"/><rect x="1251" y="911" width="70" height="17" fill="#fff"/><rect x="1321" y="854" width="19" height="14" fill="#fff"/>
<path d="M1251 958c20-18 60-26 89-24v24z" fill="#3c4a4e"/>
<g font-size="7" font-weight="700" fill="#e8f0f2"><text x="1261" y="873">Interreg Youth</text><text x="1261" y="882">Road Show in</text><text x="1261" y="891">Southeast</text><text x="1261" y="899">Europe</text></g>
<text x="1261" y="918" font-size="4" fill="#555">1-8 November</text><text x="1261" y="924" font-size="4" fill="#555">Thessaloniki and Batumi</text>
<ellipse cx="1267" cy="941" rx="6" ry="7" fill="#d8c820"/>
<text x="1261" y="858" font-size="4" font-weight="700" fill="#444">SAVE THE DATE!</text>
</g>
</svg>

<!-- toolbar -->
<div class="a" style="left:0;top:978px;width:1920px;height:62px;background:#f7f7f7"></div>
<svg style="left:31px;top:1003px" width="18" height="15" viewBox="0 0 18 15"><path d="M1.500 1.500h15v10h-11l-3 2.500z" fill="none" stroke="#333" stroke-width="1.100"/><path d="M5 5.500h3M10 5.500h3M5 8h8" stroke="#333"/></svg>

<div class="pill" style="left:634px;width:141px"></div>
<svg style="left:656px;top:999px" width="18" height="22" viewBox="0 0 18 22"><path d="M6 7V4a3 3 0 0 1 6 0v6M3 10c0 4 2 6 6 6 2 0 4-1 5-3M9 16v3M4 20h10M2 2l14 18" fill="none" stroke="#a83038" stroke-width="1.300"/></svg>
<div class="bt" style="left:685px;letter-spacing:-.5px">Sesi aç</div>
<svg style="left:757px;top:1005px" width="12" height="9"><path d="M1 2l5 5 5-5" fill="none" stroke="#444" stroke-width="1.200"/></svg>

<div class="pill" style="left:790px;width:183px"></div>
<svg style="left:806px;top:1001px" width="20" height="18" viewBox="0 0 20 18"><path d="M1 3h13v12H1zM14 8l5-3v8l-5-3zM2 1l13 16" fill="none" stroke="#a83038" stroke-width="1.300"/></svg>
<div class="bt" style="left:834px">Videoyu başlat</div>
<svg style="left:955px;top:1005px" width="12" height="9"><path d="M1 2l5 5 5-5" fill="none" stroke="#444" stroke-width="1.200"/></svg>

<div class="pill" style="left:988px;width:94px"></div>
<svg style="left:999px;top:1002px" width="18" height="16" viewBox="0 0 18 16"><rect x="1" y="1.500" width="16" height="13" rx="2" fill="none" stroke="#333" stroke-width="1.200"/><path d="M9 11.500V6M6.500 8 9 5l2.500 3" fill="none" stroke="#333" stroke-width="1.200"/></svg>
<div class="bt" style="left:1025px;letter-spacing:-.5px">Paylaş</div>

<div class="pill" style="left:1096px;width:82px"></div>
<svg style="left:1108px;top:999px" width="14" height="22" viewBox="0 0 14 22"><path d="M2 8V5a1 1 0 0 1 2 0V3.500a1 1 0 0 1 2 0V3a1 1 0 0 1 2 0v1a1 1 0 0 1 2 0v1a1 1 0 0 1 2 0v9c0 4-2 6-5 6s-5-2-5-6z" fill="none" stroke="#222" stroke-width="1.300"/></svg>
<div class="a" style="left:1137px;top:998px;width:1px;height:22px;background:#d8d8d8"></div>
<svg style="left:1147px;top:998px" width="24" height="24" viewBox="0 0 24 24"><path d="M15 5a8.500 8.500 0 1 0 5 5" fill="none" stroke="#222" stroke-width="1.300"/><circle cx="9" cy="11" r="1" fill="#222"/><circle cx="14" cy="11" r="1" fill="#222"/><path d="M7 15c2 3 7 3 9 0M19 2v6M16 5h6" fill="none" stroke="#222" stroke-width="1.200"/></svg>

<div class="pill" style="left:1191px;width:38px"></div>
<div class="a" style="left:1191px;width:40px;top:1002px;text-align:center;font-size:13px;line-height:14px;color:#444">···</div>
<div class="a" style="left:1243px;top:990px;width:40px;height:40px;border-radius:20px;background:#e0202f"></div>
<svg style="left:1257px;top:1004px" width="12" height="12"><path d="M1 1l10 10M11 1 1 11" stroke="#f6e0e0" stroke-width="1.200"/></svg>

<div class="a" style="left:1597px;top:988px;width:137px;height:42px;border:1.500px solid #35799f;border-radius:22px"></div>
<svg style="left:1614px;top:999px" width="20" height="22" viewBox="0 0 20 22"><circle cx="8" cy="5" r="3.500" fill="none" stroke="#333" stroke-width="1.200"/><path d="M11 11H7c-3 0-5 2-5 5v3h7" fill="none" stroke="#333" stroke-width="1.200"/><path d="M11 14h8M11 17h8M11 20h8" stroke="#333" stroke-width="1.200"/></svg>
<div class="bt" style="left:1640px;font-size:15.500px">Katılımcılar</div>
<svg style="left:1761px;top:1000px" width="19" height="20" viewBox="0 0 19 20"><path d="M10 2a7.500 7.500 0 1 1-4 13.800L2 18l1-4A7.500 7.500 0 0 1 10 2z" fill="none" stroke="#333" stroke-width="1.200"/></svg>
<div class="bt" style="left:1787px;font-size:16.200px">Sohbet</div>
<div class="a" style="left:1845px;top:989px;width:10px;height:10px;border-radius:5px;background:#0e6fd2"></div>
<div class="a" style="left:1876px;top:1002px;width:20px;text-align:center;font-size:12px;line-height:14px;color:#888">···</div>

<!-- taskbar -->
<div class="a" style="left:0;top:1040px;width:1920px;height:40px;background:#1c1c1c"></div>
<div class="a" style="left:441px;top:1040px;width:48px;height:40px;background:#4a4a4a"></div>
<svg style="left:0;top:1040px" width="620" height="40" viewBox="0 0 620 40">
<g transform="translate(0 -2)">
<path d="M16 14l6-1v7h-6zM23 13l9-1.500V20h-9zM16 21h6v7l-6-1zM23 21h9v8.500L23 28z" fill="#fff"/>
<circle cx="75" cy="18" r="6" fill="none" stroke="#fff" stroke-width="1.300"/><path d="M71 23l-6 6" stroke="#fff" stroke-width="1.500"/>
<path d="M113 13v3h11v-3M113 28v-3h11v3M113 17h11v7h-11z" fill="none" stroke="#fff" stroke-width="1.200"/><path d="M127 13v2M127 19v4M127 26v2" stroke="#fff" stroke-width="1.500"/>
<path d="M160 12h8l3 3h11v17h-22z" fill="#f2c14a"/><rect x="160" y="18" width="22" height="14" fill="#ffd768"/><rect x="167" y="25" width="8" height="7" fill="#2a80c8"/>
<path d="M213 15c0-5 12-5 12 0" fill="none" stroke="#38b0d8" stroke-width="1.500"/><rect x="208" y="15" width="22" height="19" rx="2" fill="#f6f6f6"/><rect x="215" y="20" width="4" height="4" fill="#e04a2c"/><rect x="220" y="20" width="4" height="4" fill="#6cb82c"/><rect x="215" y="25" width="4" height="4" fill="#2c9ae0"/><rect x="220" y="25" width="4" height="4" fill="#f0b820"/>
<path d="M257 21l12-10 12 10v12h-24z" fill="#2a8cd0"/><path d="M257 21l12 8 12-8v12h-24z" fill="#52b8e8"/><path d="M257 21l12 7 12-7-12 4z" fill="#fff"/>
<rect x="307" y="11" width="13" height="22" fill="#0f62b0"/><rect x="318" y="16" width="12" height="12" fill="#fff"/><path d="M319 19l4 4 6-6" fill="none" stroke="#0f62b0" stroke-width="1.300"/><text x="309" y="26" font-size="10" font-weight="700" fill="#fff" font-family="Liberation Sans">0</text>
<rect x="358" y="11" width="18" height="23" fill="#6e7f88"/><rect x="360" y="13" width="14" height="4" fill="#58c8e8"/><g fill="#c8d4dc"><rect x="360" y="19" width="3" height="3"/><rect x="365" y="19" width="3" height="3"/><rect x="360" y="24" width="3" height="3"/><rect x="365" y="24" width="3" height="3"/><rect x="360" y="29" width="3" height="3"/><rect x="365" y="29" width="3" height="3"/></g><rect x="370" y="19" width="4" height="13" fill="#3478c0"/>
<circle cx="416" cy="22" r="11.500" fill="#e8453a"/><path d="M416 22l10-6a11.500 11.500 0 0 1-8 18z" fill="#f8c830"/><path d="M416 22l2 12a11.500 11.500 0 0 1-13-16z" fill="#3aa850"/><circle cx="416" cy="22" r="6" fill="#fff"/><circle cx="416" cy="22" r="4.500" fill="#3a80e8"/>
<rect x="453" y="11" width="24" height="23" rx="5" fill="#0a0a0a"/><path d="M457 18c0 6 1 10 4 10s3-4 4-7" fill="none" stroke="#1060b0" stroke-width="3.500" stroke-linecap="round"/><path d="M473 17c-4-2-7 0-8 4" fill="none" stroke="#35b0d8" stroke-width="3.500" stroke-linecap="round"/><rect x="468" y="26" width="10" height="9" rx="1.500" fill="#f2f2f2"/><path d="M471 28h4v3h-4z" fill="#2da050"/>
<ellipse cx="513" cy="24" rx="10" ry="9" fill="#dfe6f0"/><circle cx="508" cy="23" r="1.500" fill="#2a9ae0"/><circle cx="512" cy="19" r="1.500" fill="#e04a2c"/><circle cx="517" cy="21" r="1.500" fill="#e8b020"/><circle cx="509" cy="28" r="1.500" fill="#40a850"/><path d="M516 24 523 11" stroke="#c88a40" stroke-width="2.500"/>
<rect x="552" y="11" width="22" height="23" fill="#3aa4ec"/><path d="M552 34V26l8-6 6 5 8 2v7z" fill="#1a4a98"/><circle cx="567" cy="16" r="2.500" fill="#cfe8fa"/>
</g>
<g fill="#7cc4e4"><rect x="298" y="38" width="40" height="2"/><rect x="396" y="38" width="40" height="2"/><rect x="441" y="38" width="48" height="2"/><rect x="494" y="38" width="40" height="2"/><rect x="543" y="38" width="30" height="2"/></g>
</svg>
<svg style="left:1600px;top:1040px" width="310" height="40" viewBox="0 0 310 40">
<path d="M9 28a5 5 0 0 1 0-10c2-6 10-7 13-2 5-2 8 2 7 6 2 3 0 6-3 6z" fill="#9cc8ee"/>
<circle cx="26" cy="11" r="3.500" fill="#d03020"/>
<path d="M135 23l6-6 6 6" fill="none" stroke="#fff" stroke-width="1.200"/>
<path d="M159 17h3l4-3v13l-4-3h-3zM169 17c2 2 2 5 0 7M172 15c3 3 3 8 0 11" fill="none" stroke="#fff" stroke-width="1"/>
<path d="M181 14h14v10h-14zM187 28h8M191 24v4M181 14h6v6h-6z" fill="none" stroke="#fff" stroke-width="1"/>
<path d="M280 11h16v15h-5l-3 3-3-3h-5z" fill="#fff"/><path d="M283 15h10M283 18h10M283 21h7" stroke="#1c1c1c"/>
</svg>
<div class="a" style="left:1637px;top:1052px;font-size:14.500px;line-height:17px;color:#f2f2f2">18°C</div>
<div class="a" style="left:1675px;top:1052px;font-size:14px;line-height:17px;color:#f2f2f2">Bulutlu</div>
<div class="a" style="left:1804px;width:60px;top:1043px;text-align:center;font-size:12px;line-height:15px;color:#f2f2f2">12:25</div>
<div class="a" style="left:1804px;width:60px;top:1062px;text-align:center;font-size:12px;line-height:15px;color:#f2f2f2;letter-spacing:-.2px">11.04.2023</div>
<div class="a" style="left:1917px;top:1040px;width:1px;height:40px;background:#666"></div>
</body></html>
